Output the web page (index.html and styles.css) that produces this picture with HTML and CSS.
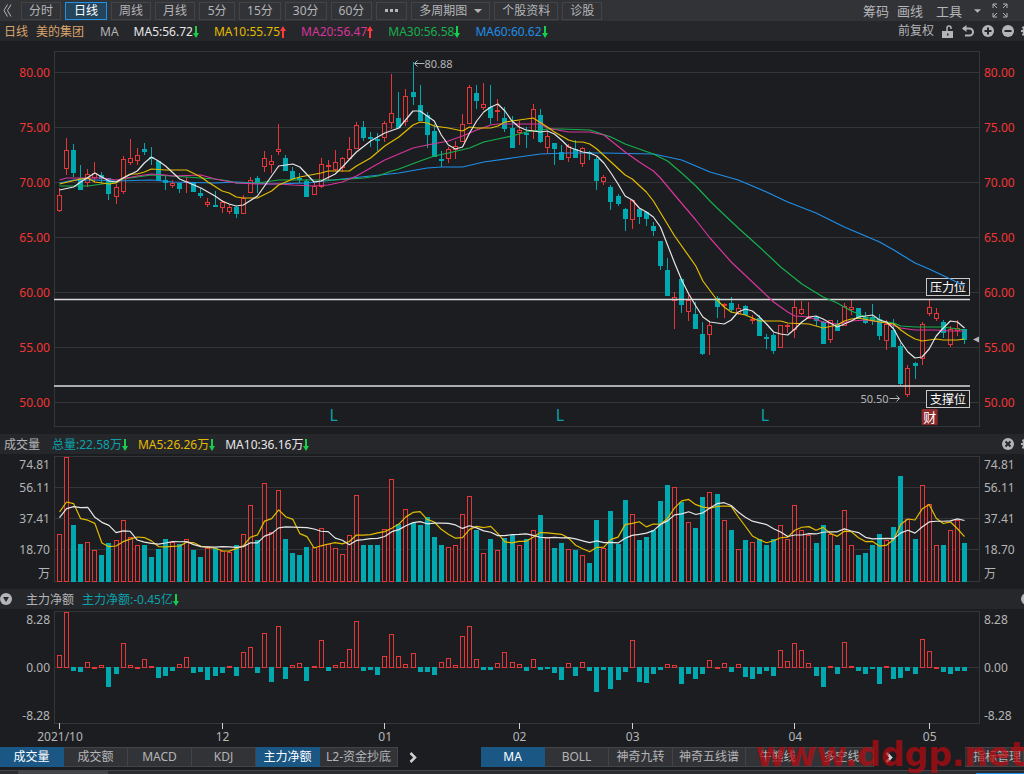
FILE: index.html
```html
<!DOCTYPE html>
<html lang="zh-CN">
<head>
    <meta charset="UTF-8">
    <meta name="viewport" content="width=device-width, initial-scale=1.0">
    <title>美的集团 日线</title>
    <link rel="stylesheet" href="styles.css">
</head>
<body>
    <!-- Shared icons -->
    <svg class="sprite" aria-hidden="true">
        <symbol id="down" viewBox="0 0 6 12"><path d="M2 0h2v7h2L3 12 0 7h2z"/></symbol>
        <symbol id="up" viewBox="0 0 6 12"><path d="M2 12h2V5h2L3 0 0 5h2z"/></symbol>
        <symbol id="gear" viewBox="0 0 12 12"><path d="M5 0h2v2l2 .6L10.400 1.200l1.200 1.200L10 4l.4 1H12v2h-1.600L10 8l1.400 1.600-1.400 1.400L8.500 10 7 10.500V12H5v-1.500L3.500 10 2 11 .8 9.600 2 8l-.5-1H0V5h1.500L2 4 .8 2.400 2.200 1 3.500 2.300 5 2zM6 4a2 2 0 1 0 0 4 2 2 0 0 0 0-4z" fill-rule="evenodd"/></symbol>
    </svg>

    <!-- Period toolbar -->
    <header class="toolbar">
        <button class="icon-btn back" aria-label="收起"><svg width="9" height="13" viewBox="0 0 9 13"><path d="M4.500 .5L1 6.500l3.500 6M8 .5L4.500 6.500l3.500 6" fill="none" stroke="currentColor"/></svg></button>
        <nav class="periods">
            <button>分时</button>
            <button class="active">日线</button>
            <button>周线</button>
            <button>月线</button>
            <button>5分</button>
            <button>15分</button>
            <button>30分</button>
            <button>60分</button>
            <button class="more" aria-label="更多周期"><svg width="13" height="3" viewBox="0 0 13 3"><path d="M0 0h3v3H0zM5 0h3v3H5zM10 0h3v3h-3z" fill="currentColor"/></svg></button>
            <button aria-haspopup="true">多周期图<svg class="caret" width="8" height="4" viewBox="0 0 8 4"><path d="M0 0h8L4 4z" fill="currentColor"/></svg></button>
            <button>个股资料</button>
            <button>诊股</button>
        </nav>
        <div class="tools">
            <button>筹码</button>
            <button>画线</button>
            <button class="tool-menu" aria-haspopup="true">工具<svg class="caret" width="7" height="4" viewBox="0 0 8 4"><path d="M0 0h8L4 4z" fill="currentColor"/></svg></button>
            <button aria-label="全屏"><svg width="16" height="15" viewBox="0 0 16 15"><path d="M1 5V1h4M1 1l4 4M11 1h4v4M15 1l-4 4M1 10v4h4M1 14l4-4M11 14h4v-4M15 14l-4-4" fill="none" stroke="currentColor"/></svg></button>
        </div>
    </header>

    <!-- Price info -->
    <section class="info quote">
        <h1>日线</h1>
        <h1 class="stock">美的集团</h1>
        <span class="ma-name">MA</span>
        <span class="white">MA5:56.72<svg class="green"><use href="#down"/></svg></span>
        <span class="yellow">MA10:55.75<svg class="red"><use href="#up"/></svg></span>
        <span class="magenta">MA20:56.47<svg class="red"><use href="#up"/></svg></span>
        <span class="green">MA30:56.58<svg class="green"><use href="#down"/></svg></span>
        <span class="blue">MA60:60.62<svg class="green"><use href="#down"/></svg></span>
        <div class="info-tools">
            <button>前复权</button>
            <button aria-label="解锁"><svg width="12" height="13" viewBox="0 0 12 13"><path d="M0 6h11v7H0zM5 8.500v2h1.500v-2z" fill="currentColor" fill-rule="evenodd"/><path d="M5 6V3a2 2 0 0 1 4 0v1" fill="none" stroke="currentColor" stroke-width="1.500"/></svg></button>
            <button aria-label="撤销"><svg width="12" height="12" viewBox="0 0 12 12"><path d="M1 3.500h6.500a3.500 3.500 0 0 1 0 7H3" fill="none" stroke="currentColor" stroke-width="2"/><path d="M0 3.500L4.500 0v7z" fill="currentColor"/></svg></button>
            <button aria-label="放大"><svg width="12" height="12" viewBox="0 0 12 12"><circle cx="6" cy="6" r="6" fill="currentColor"/><path d="M2.500 6h7M6 2.500v7" stroke="#26272b" stroke-width="2"/></svg></button>
            <button aria-label="缩小"><svg width="12" height="12" viewBox="0 0 12 12"><circle cx="6" cy="6" r="6" fill="currentColor"/><path d="M2.500 6h7" stroke="#26272b" stroke-width="2"/></svg></button>
            <button class="edge" aria-label="设置"><svg width="12" height="12"><use href="#gear"/></svg></button>
        </div>
    </section>

    <!-- Candles -->
    <section class="panel price">
        <ul class="axis left">
            <li>80.00</li><li>75.00</li><li>70.00</li><li>65.00</li><li>60.00</li><li>55.00</li><li>50.00</li>
        </ul>
        <svg id="price" role="img" aria-label="K线图"></svg>
        <ul class="axis right">
            <li>80.00</li><li>75.00</li><li>70.00</li><li>65.00</li><li>60.00</li><li>55.00</li><li>50.00</li>
        </ul>
    </section>

    <!-- Volume -->
    <section class="info sub">
        <h2>成交量</h2>
        <span class="teal">总量:22.58万<svg class="green"><use href="#down"/></svg></span>
        <span class="yellow second">MA5:26.26万<svg class="green"><use href="#down"/></svg></span>
        <span class="white second">MA10:36.16万<svg class="green"><use href="#down"/></svg></span>
        <div class="info-tools">
            <button aria-label="关闭"><svg width="12" height="12" viewBox="0 0 12 12"><circle cx="6" cy="6" r="6" fill="currentColor"/><path d="M3.500 3.500l5 5M8.500 3.500l-5 5" stroke="#26272b" stroke-width="2"/></svg></button>
            <button class="edge" aria-label="设置"><svg width="12" height="12"><use href="#gear"/></svg></button>
        </div>
    </section>
    <section class="panel volume">
        <ul class="axis left"><li>74.81</li><li>56.11</li><li>37.41</li><li>18.70</li><li>万</li></ul>
        <svg id="volume" role="img" aria-label="成交量"></svg>
        <ul class="axis right"><li>74.81</li><li>56.11</li><li>37.41</li><li>18.70</li><li>万</li></ul>
    </section>

    <!-- Net inflow -->
    <section class="info sub net-info">
        <button class="icon-btn" aria-label="折叠"><svg width="12" height="12" viewBox="0 0 12 12"><circle cx="6" cy="6" r="6" fill="currentColor"/><path d="M3 4h6L6 9z" fill="#26272b"/></svg></button>
        <h2>主力净额</h2>
        <span class="teal net-value">主力净额:-0.45亿<svg class="green"><use href="#down"/></svg></span>
        <div class="info-tools">
            <button class="edge" aria-label="关闭"><svg width="12" height="12" viewBox="0 0 12 12"><circle cx="6" cy="6" r="6" fill="currentColor"/></svg></button>
        </div>
    </section>
    <section class="panel net">
        <ul class="axis left"><li>8.28</li><li>0.00</li><li>-8.28</li></ul>
        <svg id="net" role="img" aria-label="主力净额"></svg>
        <ul class="axis right"><li>8.28</li><li>0.00</li><li>-8.28</li></ul>
    </section>

    <!-- Indicator tabs -->
    <footer class="indicators">
        <nav class="tabs">
            <button class="active">成交量</button>
            <button>成交额</button>
            <button>MACD</button>
            <button>KDJ</button>
            <button class="active">主力净额</button>
            <button>L2-资金抄底</button>
        </nav>
        <button class="next" aria-label="更多指标"><svg width="8" height="11" viewBox="0 0 8 11"><path d="M1.500 1l4.500 4.500L1.500 10" fill="none" stroke="currentColor" stroke-width="2.500"/></svg></button>
        <nav class="tabs main-tabs">
            <button class="active">MA</button>
            <button>BOLL</button>
            <button>神奇九转</button>
            <button>神奇五线谱</button>
            <button>牛熊线</button>
            <button>多空线</button>
        </nav>
        <button class="next" aria-label="更多主图指标"><svg width="8" height="11" viewBox="0 0 8 11"><path d="M1.500 1l4.500 4.500L1.500 10" fill="none" stroke="currentColor" stroke-width="2.500"/></svg></button>
        <button class="manage">指标管理</button>
        <span class="watermark">www.ddgp.net</span>
    </footer>
    <div class="strip"><i class="strip-tab"></i><i class="strip-active"></i></div>

    <script src="chart.js"></script>
</body>
</html>
```
FILE: styles.css
```css
* {
    box-sizing: border-box;
}

body {
    margin: 0;
    background: #1c1d20;
    color: #b4b5b7;
    font: 12px/20px "Noto Sans", "Noto Sans CJK SC", sans-serif;
    overflow: hidden;
}

button {
    background: none;
    border: none;
    padding: 0;
    color: inherit;
    font: inherit;
    white-space: nowrap;
    cursor: pointer;
}

button svg {
    display: block;
}

h1, h2 {
    margin: 0;
    font-size: 12px;
    font-weight: normal;
}

.sprite {
    position: absolute;
    width: 0;
    height: 0;
}

/* Colours of the indicator lines */
.white { color: #e6e6e6; }
.yellow { color: #e3bc00; }
.magenta { color: #d6359b; }
.green { color: #16b04c; }
.blue { color: #1f8fe8; }
.teal { color: #0aa2aa; }
.red { color: #ff3a3a; }

/* Toolbar */
.toolbar {
    display: flex;
    align-items: center;
    height: 21px;
    background: #323337;
}

.back {
    width: 21px;
    padding-left: 3px;
}

.periods {
    display: flex;
    gap: 4px;
}

.periods button {
    display: flex;
    align-items: center;
    justify-content: center;
    min-width: 36px;
    height: 18px;
    padding: 0 7px;
    border: 1px solid #434448;
    line-height: 16px;
}

.periods .active {
    padding: 0 8px;
    border-color: #2090e8;
    background: #24445c;
    color: #fff;
}

.periods .more {
    min-width: 31px;
}

.periods .caret {
    margin-left: 7px;
}

.tools {
    display: flex;
    align-items: center;
    gap: 8px;
    margin-left: auto;
    padding-right: 16px;
    font-size: 13px;
}

.tool-menu {
    display: flex;
    align-items: center;
    margin: 0 3px 0 5px;
}

.tools .caret {
    margin-left: 12px;
}

/* Info rows */
.info {
    display: flex;
    align-items: center;
    gap: 12px;
    height: 20px;
    padding-left: 4px;
    background: #26272b;
    white-space: nowrap;
    overflow: hidden;
}

.info h1, .info h2, .info > span {
    padding-top: 2px;
}

.info h1 {
    color: #d9a56c;
}

.quote {
    gap: 15px;
}

.quote .stock {
    margin: 0 1px 0 -7px;
}

.info span svg {
    width: 6px;
    height: 12px;
    fill: currentColor;
    vertical-align: -2px;
}

.info span .green {
    color: #16d04c;
}

.info-tools {
    display: flex;
    align-items: center;
    gap: 8px;
    margin-left: auto;
    margin-right: -9px;
    fill: currentColor;
}

.info .edge {
    margin-left: -1px;
}

.sub {
    margin-top: 6px;
}

.sub .second {
    margin-left: -2px;
}

.net-info {
    padding-left: 0;
}

.net-info .net-value {
    margin-left: -4px;
}

.net-info .icon-btn {
    margin-right: 2px;
}

/* Panels */
.panel {
    display: grid;
    grid-template-columns: 54px minmax(0, 1fr) 44px;
    padding-top: 2px;
}

.panel > svg {
    width: 100%;
    height: 100%;
    overflow: visible;
}

.price {
    height: 387px;
    padding-top: 9px;
}

.volume {
    height: 129px;
}

.net {
    height: 136px;
}

.axis {
    display: grid;
    align-content: start;
    align-items: center;
    margin: 0;
    padding: 0 4px;
    list-style: none;
}

.axis.left {
    text-align: right;
}

.price .axis {
    margin-top: -5px;
    grid-auto-rows: 55px;
    color: #f23535;
}

.volume .axis {
    grid-template-rows: 17px 29px 34px 27px 21px;
}

.net .axis {
    grid-auto-rows: 48px;
    margin-top: -15px;
}

/* Chart drawing */
.frame, .grid-line {
    fill: none;
    stroke: #35363a;
}

.rise {
    fill: #1c1d20;
    stroke: #e53638;
}

.fall {
    fill: #00a8b0;
    stroke: #00a8b0;
}

.line {
    fill: none;
    stroke: currentColor;
    stroke-width: 1.2;
    stroke-linejoin: round;
}

.level {
    stroke: #dcdcdc;
    stroke-width: 1.5;
}

.level-box {
    fill: #1c1d20;
    stroke: #c8c8c8;
}

.level-text, .news-text {
    fill: #fff;
    text-anchor: middle;
}

.event {
    fill: #0aa2aa;
    font-size: 16px;
    text-anchor: middle;
}

.news {
    fill: #8b2a2c;
}

.news-text {
    font-size: 13px;
}

.note {
    fill: #b4b5b7;
    font-size: 11px;
}

.arrow {
    fill: none;
    stroke: #b4b5b7;
}

.pointer {
    fill: #b4b5b7;
}

.tick {
    stroke: #d0d0d0;
    stroke-width: 1;
}

.date {
    fill: #b4b5b7;
    text-anchor: middle;
}

/* Indicator tabs */
.indicators {
    position: relative;
    display: flex;
    height: 22px;
    margin-top: 1px;
}

.tabs {
    display: flex;
    height: 20px;
    margin-top: 1px;
}

.tabs button, .manage {
    min-width: 64px;
    padding: 0 6px;
    border: 1px solid #434448;
    border-left: none;
    background: #323337;
    line-height: 18px;
}

.tabs .active {
    border-color: #1a5784;
    background: #1a5784;
    color: #fff;
}

.next {
    padding: 0 11px;
    color: #d0d0d0;
}

.main-tabs {
    margin-left: 53px;
}

.manage {
    height: 20px;
    margin: 1px 0 0 auto;
    padding: 0 2px 0 0;
    min-width: 59px;
    text-align: right;
}

/* Lies over the tabs */
.watermark {
    position: absolute;
    right: -2px;
    bottom: -3px;
    color: rgba(190, 10, 15, 0.7);
    font: bold 33px/32px "DejaVu Sans", sans-serif;
    pointer-events: none;
}

.strip {
    display: flex;
    justify-content: space-between;
    height: 4px;
    margin-top: 2px;
    padding-left: 18px;
    border-top: 1px solid #434448;
    background: #2b2c30;
}

.strip-tab {
    width: 90px;
    background: #434448;
}

.strip-active {
    width: 48px;
    margin-top: 2px;
    background: #2090e8;
}
```
FILE: chart.js
```js
// [high, body top, body bottom, low, rise] in plot units from the top
const candles = [
    [138,145,161,162,1],[88,100,119,125,1],[94,100,123,127,0],[115,128,140,140,0],[119,124,133,137,1],
    [112,123,128,133,1],[122,125,129,133,0],[128,128,144,150,0],[134,137,147,154,1],[106,109,142,144,1],
    [89,108,113,115,1],[98,105,111,115,1],[93,99,102,105,0],[97,107,109,115,0],[111,111,131,131,0],
    [126,130,133,140,0],[130,133,136,138,1],[133,133,139,143,0],[127,131,132,143,1],[132,132,142,142,0],
    [138,143,146,148,0],[148,152,155,157,1],[141,155,157,157,0],[150,152,158,163,1],[154,157,162,164,1],
    [156,157,164,168,0],[145,148,164,164,1],[127,130,143,143,1],[126,128,134,143,0],[101,108,117,122,1],
    [105,111,115,123,1],[74,99,102,105,1],[105,108,121,121,0],[117,121,129,129,0],[123,128,130,133,0],
    [129,131,147,147,0],[132,136,145,145,1],[108,114,137,138,1],[110,115,117,130,1],[100,112,120,121,1],
    [107,108,118,122,1],[87,99,109,109,1],[72,75,99,99,1],[71,77,88,91,0],[82,87,89,97,0],
    [83,89,91,101,0],[71,73,88,92,1],[24,63,73,79,1],[42,68,78,78,0],[39,46,72,76,1],
    [12,42,47,55,0],[35,55,71,71,0],[62,65,85,98,0],[74,81,107,107,0],[101,109,111,117,0],
    [97,99,109,113,1],[91,96,100,109,1],[64,74,92,92,1],[35,37,74,74,1],[35,43,51,59,0],
    [33,54,58,60,1],[35,57,68,74,0],[49,60,62,71,1],[57,68,79,82,0],[66,78,98,98,0],
    [71,80,83,95,1],[77,83,85,98,0],[54,59,81,89,1],[59,65,92,93,0],[81,86,98,103,1],
    [93,93,99,115,0],[95,102,110,110,0],[94,96,108,112,1],[90,99,108,108,0],[97,98,114,117,1],
    [101,102,104,110,0],[107,109,131,140,0],[125,127,132,135,1],[135,137,152,160,0],[144,146,154,156,0],
    [158,159,169,181,0],[150,150,170,179,1],[158,159,167,174,0],[161,162,169,176,0],[172,176,181,186,0],
    [191,191,216,220,0],[208,220,246,246,0],[242,247,251,279,1],[228,229,255,263,0],[245,250,262,271,1],
    [252,264,279,279,0],[272,284,304,305,0],[272,275,285,305,1],[246,248,257,268,0],[253,254,256,268,1],
    [247,253,260,263,0],[254,258,264,265,1],[255,256,265,265,0],[265,269,271,274,1],[265,268,286,286,0],
    [284,287,289,299,0],[283,285,301,304,0],[275,275,298,298,1],[274,275,277,283,1],[250,257,280,288,1],
    [251,259,264,265,1],[252,267,268,268,1],[266,267,271,276,0],[271,272,294,294,0],[270,270,290,293,1],
    [270,274,281,281,0],[253,256,276,276,1],[250,257,260,265,1],[258,258,269,269,0],[262,267,273,274,0],
    [254,267,271,275,0],[264,269,286,290,0],[270,274,291,300,1],[269,280,297,297,0],[293,296,334,335,0],
    [315,318,345,347,1],[312,313,316,329,0],[272,274,309,315,1],[250,257,264,266,1],[258,263,269,271,1],
    [270,272,283,288,0],[276,279,295,297,1],[270,278,281,286,1],[279,279,290,294,0]
];

// Moving averages: index, height pairs
const averages = {
    blue: [0,133,2,130,5,130,8,131,13,130,16,132,22,133,25,132,30,134,35,133,40,129,44,126,48,123,52,118,54,117,57,117,60,112,64,108,68,104,72,103,77,103,84,104,88,110,92,122,96,130,100,142,103,152,107,163,111,177,116,192,118,200,121,213,123,219,126,229,128,236],
    green: [0,136,4,136,6,134,8,132,9,129,11,127,13,125,16,126,18,127,22,129,24,131,25,133,28,133,31,130,36,130,39,130,43,128,45,126,47,121,48,119,51,111,53,106,55,103,58,98,60,92,62,89,64,86,66,82,69,79,71,79,75,80,78,87,80,94,82,99,84,104,86,111,88,123,90,136,92,151,93,158,96,178,99,197,102,217,105,234,108,247,110,253,112,261,114,267,116,271,118,273,119,276,121,277,125,277,128,280],
    magenta: [0,130,1,128,6,128,8,130,11,126,13,124,15,125,16,126,20,125,22,129,25,133,28,134,31,134,33,135,36,136,38,135,40,132,42,126,44,118,46,110,48,104,50,98,52,95,55,91,57,86,59,80,61,75,62,74,68,74,69,78,72,82,75,82,77,85,80,102,82,112,84,121,85,128,87,145,90,170,92,188,95,212,98,232,101,252,103,262,104,266,106,267,108,272,110,274,112,271,114,270,117,273,119,278,121,280,124,280,126,281,128,281],
    yellow: [0,134,3,129,4,128,5,132,7,134,8,133,9,128,10,124,11,124,12,122,13,119,15,120,18,120,20,127,21,132,23,141,24,143,25,147,26,148,28,148,30,141,31,135,33,129,34,127,37,123,38,121,41,121,42,116,44,108,46,96,48,87,50,75,51,72,52,73,53,76,55,78,57,81,58,77,59,78,61,78,62,76,63,72,64,71,67,68,69,77,70,82,72,90,73,92,74,92,75,94,76,99,78,112,80,125,81,129,83,142,84,151,87,186,90,216,91,231,93,250,94,257,95,262,97,265,99,271,102,271,103,273,106,274,108,278,110,275,111,271,112,269,113,268,116,272,118,274,119,280,120,285,121,289,122,291,124,289,125,290,127,290,128,289],
    white: [0,140,2,137,3,132,5,123,7,131,8,132,9,128,11,121,12,113,13,107,14,111,15,116,17,129,18,132,20,138,22,146,23,151,24,154,25,156,26,155,28,146,29,136,30,126,31,116,33,114,34,117,36,132,37,131,39,124,40,117,42,102,44,91,46,83,48,78,50,61,51,61,53,71,54,85,55,95,56,99,57,97,58,83,59,71,60,62,61,57,62,54,63,61,64,71,65,77,66,80,67,81,68,82,69,81,70,84,71,90,72,97,74,102,75,103,76,106,77,113,78,123,79,134,80,146,81,150,82,158,83,162,84,167,85,177,86,195,87,213,88,230,89,244,90,256,91,267,92,272,94,274,95,270,96,262,97,259,98,261,99,267,100,274,101,282,102,284,103,285,104,279,105,272,106,267,107,266,108,269,110,277,112,271,113,267,115,265,116,270,117,272,118,279,119,292,120,302,121,308,122,307,123,299,124,286,125,278,126,271,127,272,128,278]
};

const volumes = [
    29,75,34.4,23,24,19.4,16,23.6,25,37,27,22.4,22,15,20,26,24,23,26,19,15,20.6,20.6,18.6,18,22.4,29,46.4,25.4,59.4,
    30,55,26,17.6,16.4,21,21,32.6,23,20.6,17,28.4,52,22.4,22.4,22.4,32,62,35,44,35.6,34.4,39,27,22,21,22.4,41,51.4,31,
    17.6,26,19,26.6,28,22.4,26,31.4,40.4,27,20.6,23.6,20,19,16.4,11.6,37,20.6,42.4,23,49,41,25.4,27,31.4,48.4,58.4,57,48,36,
    32.6,51,54,53,37.4,31.4,20,25.4,24,26,22.4,26,34.4,26,46.4,31.4,28,23.6,34.4,29,22,43.4,22,16.4,17.6,22.4,29,25.4,33,63.6,
    38,26,58.2,47,22,22.4,31,37.4,23.6
];

const net = [
    1.9,8.4,-.6,-.7,.9,.1,.5,-3,-1,3.8,.5,.1,1.4,.3,-1.6,-1.3,-.6,.6,1.7,-.9,-.7,-2,-1.3,-.9,.3,-1.3,2.4,3.2,-.9,5.3,
    -2.2,6.3,-1.8,.5,.8,-2.1,.3,4.2,-.6,.5,.9,2.9,7,-.6,-.4,-1.2,1.8,5.1,1.8,.6,2.3,-.7,-.7,-1.2,.9,1.5,.5,4.8,6.3,1.4,
    -.4,-.4,.8,2.4,.9,.6,-.6,1.4,-.4,-.1,-.9,-2,.8,-1.3,.9,-.6,-3.8,-.4,-3.3,-2,-.7,4.2,-2.2,-2.4,-1,-.4,.6,.5,-2.5,-1,
    -1.8,-1,1.2,.1,.8,-.7,.6,-1.5,-1.8,-1,-.6,-1.3,2.7,1,3.8,2.7,.8,-1.3,-3,.3,-1,3.9,.3,-.6,-1,-.2,-2.5,.3,-1.8,-1.6,
    -.6,-1,4.4,2.6,.1,-.7,-1,-.6,-.6
];

const dates = [[0, '2021/10'], [23, '12'], [46, '01'], [65, '02'], [81, '03'], [104, '04'], [123, '05']];

function add(svg, name, attrs, text) {
    const el = document.createElementNS('http://www.w3.org/2000/svg', name);
    for (const key in attrs) el.setAttribute(key, attrs[key]);
    if (text) el.textContent = text;
    svg.appendChild(el);
}

function path(svg, cls, d) {
    add(svg, 'path', { class: cls, d: d });
}

// Rising bars are hollow, falling ones are filled
function bar(svg, x, top, bottom, rise) {
    add(svg, 'rect', {
        class: rise ? 'rise' : 'fall',
        x: Math.round(x) - 2 + 0.5,
        y: top + 0.5,
        width: 4,
        height: Math.max(bottom - top - 1, 1)
    });
}

function frame(svg, width, top, bottom, lines) {
    add(svg, 'rect', { class: 'frame', x: 0.5, y: top + 0.5, width: width - 1, height: bottom - top });
    lines.forEach(y => path(svg, 'grid-line', `M0 ${y + 0.5}H${width}`));
}

function drawPrice(svg, width, x) {
    frame(svg, width, 1, 376, [22, 77, 132, 187, 242, 297, 352]);

    [[228, '压力位'], [340, '支撑位']].forEach(([y, label]) => {
        add(svg, 'rect', { class: 'level-box', x: width - 53.5, y: y + 0.5, width: 43, height: 17 });
        add(svg, 'text', { class: 'level-text', x: width - 32, y: y + 14 }, label);
    });

    candles.forEach(([high, top, bottom, low, rise], i) => {
        const mid = Math.round(x(i)) + 0.5;
        path(svg, rise ? 'rise' : 'fall', `M${mid} ${high}V${top}M${mid} ${bottom}V${low}`);
        bar(svg, x(i), top, bottom, rise);
    });

    path(svg, 'level', `M0 249.500H${width - 10}M0 336H${width - 10}`);

    for (const color in averages) {
        const p = averages[color];
        let d = '';
        for (let i = 0; i < p.length; i += 2) d += (i ? 'L' : 'M') + (x(p[i]) + 0.5) + ' ' + p[i + 1];
        path(svg, 'line ' + color, d);
    }

    // Highest and lowest price
    path(svg, 'arrow', `M${x(50) + 12} 13.500h-10m3 -3l-3 3l3 3`);
    add(svg, 'text', { class: 'note', x: x(50) + 12, y: 18 }, '80.88');
    path(svg, 'arrow', `M${x(120) - 18} 348.500h10m-3 -3l3 3l-3 3`);
    add(svg, 'text', { class: 'note', x: x(120) - 47, y: 353 }, '50.50');

    [39, 71, 100].forEach(i => add(svg, 'text', { class: 'event', x: x(i) - 1, y: 371 }, 'L'));
    add(svg, 'rect', { class: 'news', x: x(123) - 7, y: 359, width: 16, height: 16, rx: 1 });
    add(svg, 'text', { class: 'news-text', x: x(123) + 1, y: 372 }, '财');
    path(svg, 'pointer', `M${width - 7} 289.500l6 -3v6z`);
}

// First values come from days before the visible range
function average(n, first) {
    return volumes.map((v, i) => i < first.length
        ? first[i]
        : volumes.slice(i - n + 1, i + 1).reduce((a, b) => a + b) / n);
}

function drawVolume(svg, width, x) {
    const y = v => 126 - v / 0.6;
    frame(svg, width, 0, 125, [31, 62, 93]);
    volumes.forEach((v, i) => bar(svg, x(i), Math.round(y(v)), 126, candles[i][4]));
    const line = (values, color) => path(svg, 'line ' + color,
        'M' + values.map((v, i) => (x(i) + 0.5) + ' ' + y(v)).join('L'));
    line(average(5, [42, 48, 47, 38]), 'yellow');
    line(average(10, [38.6, 44, 45.2, 44.6, 44.8, 38.8, 35.8, 34, 29.6]), 'white');
}

function drawNet(svg, width, x) {
    frame(svg, width, 0, 112, [56]);
    net.forEach((v, i) => {
        const h = Math.max(Math.round(Math.abs(v) * 6.67), 1);
        bar(svg, x(i), v > 0 ? 57 - h : 56, v > 0 ? 57 : 56 + h, v > 0);
    });
    dates.forEach(([i, label]) => {
        path(svg, 'tick', `M${Math.round(x(i)) + 0.5} 112v6`);
        add(svg, 'text', { class: 'date', x: x(i) + 1, y: 130 }, label);
    });
}

function draw() {
    [['price', drawPrice], ['volume', drawVolume], ['net', drawNet]].forEach(([id, fn]) => {
        const svg = document.getElementById(id);
        const width = svg.parentNode.clientWidth - 98;
        svg.innerHTML = '';
        fn(svg, width, i => 5 + i * (width - 21) / 128);
    });
}

draw();
window.addEventListener('resize', draw);
```
